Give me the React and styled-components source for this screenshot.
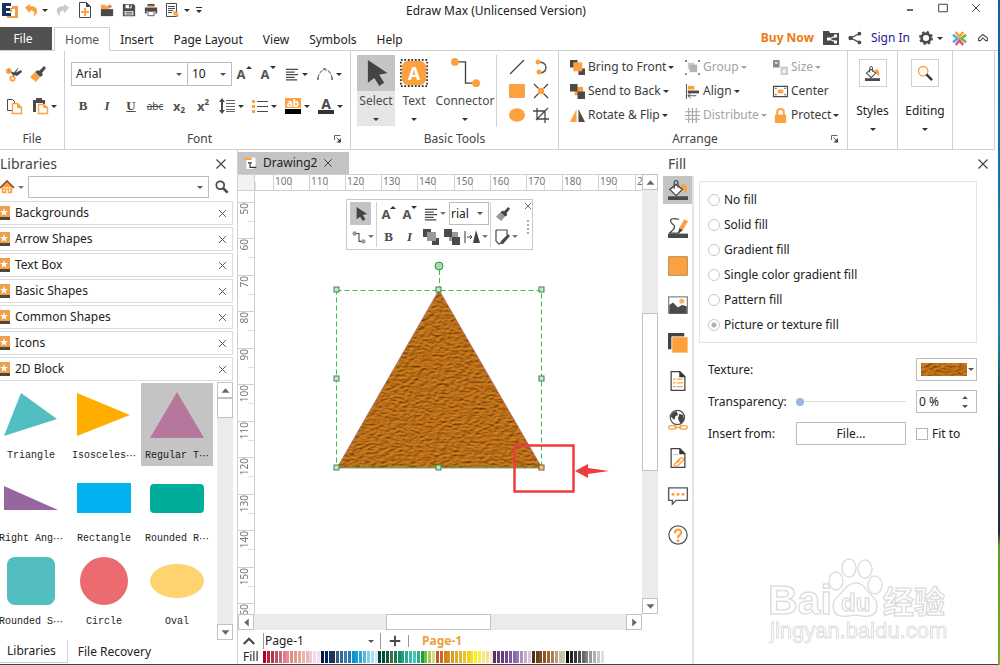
import React, { useState } from 'react'
import styled, { createGlobalStyle } from 'styled-components'

const dark = '#4a4a4a'
const orange = '#fca13e'
const line = '#d0d0d0'

const GlobalStyle = createGlobalStyle`
  * { box-sizing: border-box; }
  body {
    margin: 0;
    background: #fff;
    color: #222;
    font-family: 'Noto Sans', 'Noto Sans CJK SC', sans-serif;
    font-size: 12px;
    line-height: 16px;
  }
  button, input, select { font: inherit; color: inherit; margin: 0; padding: 0; border-radius: 0; }
  button { background: none; border: 0; }
  a { text-decoration: none; }
  svg { display: block; flex: none; overflow: visible; }
`

/* ---------- frame ---------- */

const Window = styled.div`
  display: flex;
  flex-direction: column;
  min-height: 100vh;
  border: 0 solid;
  border-width: 0 2px 0 0;
  border-image: linear-gradient(#0f5f9c, #1a86a8 50%, #14444f 62%, #1c2b3a 80%, #5c9a2a 82%, #74b02c) 1;
  box-shadow: inset 0 -1px #444;
  padding-bottom: 1px;
`

const TitleBar = styled.header`
  display: grid;
  grid-template-columns: 1fr auto 1fr;
  height: 27px;
  padding-right: 6px;
`

const QuickAccess = styled.div`
  display: flex;
  align-items: center;
  height: 20px;
`

const QuickButton = styled.button`
  display: flex;
  align-items: center;
  justify-content: center;
  gap: 4px;
  width: ${p => p.$w || 22}px;
  height: 20px;
`

const Title = styled.h1`
  margin: 0;
  font-size: 12px;
  font-weight: 400;
  line-height: 22px;
`

const WindowControls = styled.div`
  display: flex;
  justify-content: flex-end;
`

const ControlButton = styled.button`
  display: flex;
  align-items: center;
  justify-content: center;
  width: 33px;
  height: 16px;
`

const MenuBar = styled.nav`
  display: flex;
  height: 24px;
  border-bottom: 1px solid ${line};
`

const FileButton = styled.button`
  width: 52px;
  height: 23px;
  padding-right: 6px;
  background: #515151;
  color: #fff;
`

const MenuTab = styled.button`
  height: 24px;
  padding: 0 ${p => (p.$active ? 10 : 9)}px;
  margin-left: ${p => (p.$active ? 2 : 0)}px;
  border: 1px solid ${p => (p.$active ? line : 'transparent')};
  border-bottom: 0;
  background: ${p => (p.$active ? '#fff' : 'none')};
  color: ${p => (p.$active ? '#555' : '#222')};
`

const Account = styled.div`
  display: flex;
  align-items: center;
  gap: 9px;
  margin-left: auto;
  padding-right: 8px;
  height: 22px;
`

const BuyLink = styled.a`
  color: #ee7a14;
  font-weight: 700;
`

const SignLink = styled.a`
  color: #26208f;
`

const IconButton = styled.button`
  display: flex;
  align-items: center;
  justify-content: center;
  gap: 4px;
`

const Caret = styled.span`
  flex: none;
  width: 0;
  height: 0;
  border: 3px solid transparent;
  border-top-color: ${p => p.$color || '#333'};
  border-bottom: 0;
`

/* ---------- ribbon ---------- */

const Ribbon = styled.div`
  display: flex;
  height: 99px;
  margin-right: 3px;
  border-bottom: 1px solid ${line};
  border-right: 1px solid ${line};
`

const Group = styled.section`
  display: flex;
  flex-direction: column;
  border-right: 1px solid ${line};
`

const GroupFoot = styled.div`
  display: flex;
  align-items: center;
  height: 20px;
  color: #444;
  text-align: center;
`

const GroupName = styled.span`
  flex: 1;
`

const Launcher = styled.button`
  width: 16px;
  height: 12px;
`

const ToolRows = styled.div`
  display: flex;
  flex-direction: column;
  gap: 8px;
  flex: 1;
  padding: 11px ${p => p.$right}px 0 ${p => p.$left}px;
`

const ToolRow = styled.div`
  display: flex;
  height: 24px;
`

const Tool = styled.button`
  display: flex;
  align-items: center;
  justify-content: center;
  gap: 3px;
  width: ${p => p.$w || 24}px;
  height: 24px;
  color: ${dark};
`

const caretImage = "url(\"data:image/svg+xml,%3Csvg xmlns='http://www.w3.org/2000/svg' width='6' height='3'%3E%3Cpath d='M0 0h6L3 3z' fill='%23555'/%3E%3C/svg%3E\")"

const Combo = styled.select`
  appearance: none;
  width: ${p => p.$w}px;
  height: ${p => p.$h || 24}px;
  padding-left: ${p => p.$pad || 4}px;
  margin-right: ${p => p.$join ? -1 : 0}px;
  border: 1px solid #bdbdbd;
  background: #fff ${caretImage} no-repeat right ${p => p.$caret || 5}px center;
`

const LargeTools = styled.div`
  display: flex;
  flex: 1;
  padding: 4px 5px 0 6px;
`

const LargeTool = styled.button`
  display: flex;
  flex-direction: column;
  align-items: center;
  width: ${p => p.$w}px;
  height: 71px;
  background: ${p => (p.$active ? '#e6e6e6' : 'none')};
  color: ${dark};
`

const LargeIcon = styled.span`
  display: flex;
  align-items: center;
  justify-content: center;
  width: 100%;
  height: 36px;
  margin-bottom: 2px;
  background: ${p => (p.$active ? '#c4c4c4' : 'none')};
`

const LargeCaret = styled(Caret)`
  margin-top: 9px;
`

const MiniGrid = styled.div`
  display: grid;
  grid-template-columns: 24px 24px;
  grid-auto-rows: 24px;
  margin-left: -1px;
  padding-left: 8px;
  border-left: 1px solid ${line};
  height: 72px;
`

const ArrangeGrid = styled.div`
  display: grid;
  grid-template-columns: 115px 88px 77px;
  grid-auto-rows: 24px;
  flex: 1;
  padding: 4px 0 0 8px;
`

const ArrangeTool = styled.button`
  display: flex;
  align-items: center;
  white-space: nowrap;
  color: ${p => (p.$off ? '#a3a3a3' : '#3c3c3c')};
`

const ArrangeIcon = styled.span`
  display: flex;
  justify-content: center;
  width: 20px;
  margin-right: 1px;
`

const ArrangeText = styled.span`
  margin-right: 2px;
`

const PanelTool = styled.button`
  display: flex;
  flex-direction: column;
  align-items: center;
  width: ${p => p.$w}px;
  padding-top: 8px;
  border-right: 1px solid ${line};
`

const PanelIcon = styled.span`
  display: flex;
  align-items: center;
  justify-content: center;
  width: 28px;
  height: 28px;
  margin-bottom: 16px;
  border: 1px solid ${line};
`

/* ---------- workspace ---------- */

const Workspace = styled.main`
  display: flex;
  flex: 1;
`

const Sidebar = styled.aside`
  display: flex;
  flex-direction: column;
  width: 238px;
  border-right: 1px solid ${line};
`

const PanelHead = styled.div`
  display: flex;
  align-items: center;
  justify-content: space-between;
  height: 26px;
  padding: 2px ${p => p.$right || 10}px 0 ${p => p.$left || 0}px;
`

const PanelTitle = styled.h2`
  margin: 0;
  font-size: 14px;
  font-weight: 400;
  color: #444;
`

const LibrarySearch = styled.div`
  display: flex;
  align-items: center;
  height: 22px;
  padding-right: 8px;
  margin-bottom: 3px;
`

const HomeButton = styled(IconButton)`
  width: 28px;
  justify-content: flex-start;
`

const SearchInput = styled.input`
  flex: 1;
  min-width: 0;
  height: 22px;
  padding: 0 16px 0 4px;
  border: 1px solid #bdbdbd;
  background: #fff ${caretImage} no-repeat right 5px center;
  margin-right: 6px;
`

const LibraryList = styled.ul`
  display: flex;
  flex-direction: column;
  gap: 2px;
  margin: 0 4px 0 0;
  padding: 0;
  list-style: none;
`

const LibraryItem = styled.li`
  display: flex;
  align-items: center;
  gap: 5px;
  height: 24px;
  padding-right: 5px;
  border: 1px solid #dcdcdc;
  border-left: 0;
`

const LibraryName = styled.span`
  flex: 1;
`

const ShapeArea = styled.div`
  display: flex;
  flex: 1;
  margin: 1px 4px 0 0;
`

const ShapeGrid = styled.div`
  display: grid;
  grid-template-columns: repeat(3, 73px);
  grid-auto-rows: 83px;
  flex: 1;
  margin-left: -5px;
  padding-top: 1px;
`

const ShapeCell = styled.button`
  display: flex;
  flex-direction: column;
  align-items: center;
  width: 72px;
  background: ${p => (p.$active ? '#c4c4c4' : 'none')};
  font-family: 'Liberation Mono', monospace;
  font-size: 10px;
  white-space: nowrap;
`

const ShapeName = styled.span`
  display: flex;
  margin-top: 2px;
  line-height: 14px;
`

const Dots = styled.span`
  font-family: 'Noto Sans CJK SC', sans-serif;
`

const SideTabs = styled.div`
  display: flex;
  height: 24px;
`

const SideTab = styled.button`
  padding: 0 11px 0 ${p => (p.$active ? 7 : 10)}px;
  height: 23px;
  border: solid ${line};
  border-width: ${p => (p.$active ? '0 1px 1px 0' : 0)};
`

const Scrollbar = styled.div`
  display: flex;
  flex-direction: ${p => (p.$horizontal ? 'row' : 'column')};
  ${p => (p.$horizontal ? 'height' : 'width')}: 16px;
  background: #ebebeb;
`

const ScrollArrow = styled.button`
  display: flex;
  align-items: center;
  justify-content: center;
  flex: none;
  width: 16px;
  height: 16px;
  border: 1px solid #c2c2c2;
  background: #fff;
`

const Track = styled.div`
  display: flex;
  flex-direction: inherit;
  flex: 1;
`

const Space = styled.span`
  flex: ${p => p.$grow};
`

const Thumb = styled.span`
  flex: ${p => p.$grow};
  border: 1px solid #c2c2c2;
  background: #fff;
`

/* ---------- drawing area ---------- */

const Center = styled.section`
  display: flex;
  flex-direction: column;
  flex: 1;
  min-width: 0;
  padding: 2px 2px 0 0;
`

const DocTab = styled.div`
  display: flex;
  align-items: center;
  align-self: flex-start;
  gap: 6px;
  width: 111px;
  height: 22px;
  padding-left: 7px;
  background: #c4c4c4;
`

const DrawGrid = styled.div`
  display: grid;
  grid-template-columns: 17px minmax(0, 1fr) 16px;
  grid-template-rows: 17px minmax(0, 1fr) 16px;
  flex: 1;
`

const ScrollColumn = styled.div`
  display: flex;
  grid-row: 1 / 3;
  grid-column: 3;
`

const ScrollRow = styled(Scrollbar)`
  grid-column: 1 / 3;
`

const Corner = styled.div`
  background: #f2f2f2;
  border: solid ${line};
  border-width: 1px 1px 1px 0;
`

const RulerX = styled.div`
  display: flex;
  overflow: hidden;
  padding-left: 18px;
  border: solid ${line};
  border-width: 1px 0;
  background: linear-gradient(#ddd, #ddd) 0 100% / 1px 8px no-repeat;
`

const MarkX = styled.span`
  flex: none;
  width: 36px;
  padding-left: 1px;
  border-left: 1px solid ${line};
  background: linear-gradient(#ddd, #ddd) 17px 100% / 1px 6px no-repeat;
  color: #777;
  font-size: 10px;
  line-height: 12px;
  &:nth-child(5n) { width: 37px; }
`

const RulerY = styled.div`
  height: 0;
  min-height: 100%;
  overflow: hidden;
  padding-top: 11px;
  border-right: 1px solid ${line};
`

const MarkY = styled.span`
  display: flex;
  height: 36px;
  border-top: 1px solid ${line};
  background: linear-gradient(#ddd, #ddd) 100% 18px / 6px 1px no-repeat;
  &:nth-child(even) { height: 37px; }
`

const MarkYText = styled.span`
  writing-mode: vertical-rl;
  transform: rotate(180deg);
  color: #777;
  font-size: 10px;
  line-height: 12px;
  margin-bottom: auto;
`

const Canvas = styled.div`
  position: relative;
  overflow: hidden;
`

const Drawing = styled.svg`
  position: absolute;
  left: 75px;
  top: 65px;
`

const FloatBar = styled.div`
  position: absolute;
  left: 91px;
  top: 8px;
  display: flex;
  width: 187px;
  height: 51px;
  padding: 2px;
  border: 1px solid #c8c8c8;
  background: #fff;
`

const FloatPart = styled.div`
  width: ${p => p.$w}px;
  padding-left: 1px;
  border-right: ${p => (p.$last ? 0 : `1px solid ${line}`)};
`

const FloatRow = styled.div`
  display: flex;
  height: 23px;
`

const FloatTool = styled.button`
  display: flex;
  align-items: center;
  justify-content: center;
  gap: 2px;
  width: ${p => p.$w || 21}px;
  height: 23px;
  color: ${dark};
  background: ${p => (p.$active ? '#c4c4c4' : 'none')};
`

const FloatSide = styled.div`
  display: flex;
  flex-direction: column;
  align-items: center;
  flex: 1;
  gap: 9px;
`

const PageBar = styled.div`
  display: flex;
  align-items: center;
  height: 20px;
  padding: 2px 0 0 5px;
`

const PageSelect = styled.select`
  appearance: none;
  width: 118px;
  height: 16px;
  padding-left: 1px;
  margin-left: 8px;
  border: solid #999;
  border-width: 0 1px;
  background: ${caretImage} no-repeat right 6px center;
`

const AddPage = styled(IconButton)`
  width: 28px;
  height: 12px;
  border-right: 1px solid #999;
`

const PageTab = styled.button`
  margin-left: 13px;
  color: #eba03c;
  font-weight: 700;
`

const PaletteBar = styled.div`
  display: flex;
  align-items: center;
  height: 14px;
  padding-left: 5px;
`

const PaletteName = styled.span`
  width: 20px;
`

const Palette = styled.div`
  display: flex;
  gap: 1px;
`

const Swatch = styled.button`
  width: 3px;
  height: 12px;
  &:nth-child(6n) { margin-right: -1px; }
`

/* ---------- fill dock ---------- */

const Dock = styled.aside`
  display: flex;
  flex-direction: column;
  width: 338px;
`

const DockBody = styled.div`
  display: flex;
  flex: 1;
`

const DockStrip = styled.div`
  display: flex;
  flex-direction: column;
  gap: 10px;
  width: 34px;
  padding-left: 3px;
  border-right: 2px solid #e4e4e4;
`

const DockButton = styled.button`
  display: flex;
  align-items: center;
  justify-content: center;
  width: 29px;
  height: 28px;
  background: ${p => (p.$active ? '#c4c4c4' : 'none')};
  &:nth-child(3n) { margin-bottom: 1px; }
`

const FillForm = styled.form`
  flex: 1;
  padding: 5px 21px 0 5px;
`

const FillKinds = styled.fieldset`
  display: flex;
  flex-direction: column;
  min-width: 0;
  margin: 0 0 15px;
  padding: 5px 8px;
  border: 1px solid #e4e4e4;
`

const Choice = styled.label`
  display: flex;
  align-items: center;
  gap: 4px;
  height: 25px;
`

const Radio = styled.input`
  appearance: none;
  width: 12px;
  height: 12px;
  margin: 0;
  border: 1px solid #c8c8c8;
  border-radius: 50%;
  background: #fff;
  &:checked { background: radial-gradient(circle, #b0b0b0 2px, #fff 3px); }
`

const Check = styled.input`
  appearance: none;
  width: 12px;
  height: 12px;
  margin: 0;
  border: 1px solid #b5b5b5;
`

const FieldGrid = styled.div`
  display: grid;
  grid-template-columns: 78px 1fr 61px;
  grid-auto-rows: 23px;
  column-gap: 10px;
  row-gap: 9px;
  align-items: center;
  padding-left: 9px;
`

const FieldLabel = styled.label`
  grid-column: 1;
`

const Slider = styled.input`
  appearance: none;
  width: 100%;
  height: 10px;
  background: linear-gradient(#dcdcdc, #dcdcdc) center / 100% 1px no-repeat;
  &::-webkit-slider-thumb {
    appearance: none;
    width: 8px;
    height: 8px;
    border-radius: 50%;
    background: #9db1ea;
  }
`

const PlainButton = styled.button`
  height: 23px;
  border: 1px solid #bdbdbd;
`

const TextureBox = styled.div`
  display: grid;
  grid-column: 3;
  align-items: center;
  > * { grid-area: 1 / 1; }
`

const TexturePreview = styled.svg`
  margin-left: 5px;
  pointer-events: none;
`

const Spinner = styled.div`
  display: flex;
  align-items: center;
  height: 23px;
  padding-right: 5px;
  border: 1px solid #bdbdbd;
`

const SpinInput = styled.input`
  width: 100%;
  min-width: 0;
  padding-left: 2px;
  border: 0;
`

const SpinArrows = styled.button`
  display: flex;
`

const Watermark = styled.svg`
  position: fixed;
  right: 50px;
  bottom: 17px;
  pointer-events: none;
`

/* ---------- icons ---------- */

const art = {
  logo: <><path d="M0 1h9v3H4v2h4v3H4v2h5v3H0z" fill="#17325e" /><path d="M10 4h6v12H5v-2h8V7h-3v3H8V6h2z" fill="#f0a04a" /></>,
  undo: <path d="M1 5l6-4v3c5-1 8 2 8 5s-2 5-4 6c1-2 1-4 0-5-1-1-2-2-4-1v3z" fill={orange} />,
  redo: <path d="M15 5L9 1v3C4 3 1 6 1 9s2 5 4 6c-1-2-1-4 0-5 1-1 2-2 4-1v3z" fill="#c9c9c9" />,
  newDoc: <><path d="M2.500.500h7l4 4v11h-11z" fill="#fff" stroke={dark} /><path d="M9 0v5h5z" fill={dark} /><path d="M7 6h2v3h3v2H9v3H7v-3H4V9h3z" fill={orange} /></>,
  open: <><path d="M1 2h5l1 2h2v3H1z" fill={orange} /><path d="M1 7h14v8H1z" fill={dark} /><path d="M10 1l4 3-4 3V5H8V3h2z" fill="#d48a3a" /></>,
  save: <><path d="M1 1h12l2 2v12H1z" fill={dark} /><path d="M4 2h7v4H4zM3 9h10v5H3z" fill="#fff" /><path d="M8 2h2v3H8zM4 10h8v1H4zM4 12h8v1H4z" fill={dark} /></>,
  print: <><path d="M4 1h8v3H4zM1 5h14v7h-2V9H3v3H1z" fill={dark} /><path d="M4.500 9.500h7v5h-7z" fill="#fff" stroke={dark} /><path d="M4 3h8v2H4z" fill={orange} /></>,
  list: <><path d="M2.500 1.500h10v13h-10z" fill="#fff" stroke={dark} /><path d="M4 4h7v1H4zM4 6h7v1H4zM4 8h5v1H4zM4 10h4v1H4z" fill={dark} /><path d="M9 9l6 1-2 1 2 3-1 1-3-2-1 2z" fill={orange} /></>,
  cut: <><path d="M2 4l7 3 6-3 1 2-5 4-3-1-6-4z" fill={dark} /><path d="M13 1l-5 9-2-1 5-6z" fill={dark} /><g fill="none" stroke={orange} strokeWidth="1.800"><circle cx="2.800" cy="5" r="2" /><circle cx="6.500" cy="12.500" r="2.200" /></g></>,
  brush: <><path d="M14 0l2 2-4 5 1 2-3 2-5-5 3-2 1 1z" fill={dark} /><path d="M5 6l5 5-4 5-6-5z" fill={orange} /></>,
  grayBrush: <><path d="M14 0l2 2-4 5 1 2-3 2-5-5 3-2 1 1z" fill="#444" /><path d="M5 6l5 5-4 5-6-5z" fill="#999" /></>,
  copy: <><path d="M1.500 1.500h5l2 2v9h-7z" fill="#fff" stroke={dark} /><path d="M6.500 5.500h5l4 4v6h-9z" fill="#fff" stroke={orange} strokeWidth="1.400" /><path d="M11 5v5h5z" fill={orange} /></>,
  paste: <><path d="M1 2h12v4h-2V5H4v9H1z" fill={dark} /><path d="M4 0h6v4H4z" fill={dark} /><path d="M6.500 6.500h5l4 3v6h-9z" fill="#fff" stroke={orange} strokeWidth="1.400" /><path d="M11 6v4h5z" fill={orange} /></>,
  alignText: <path d="M1 2h14v1.500H1zM1 5h10v1.500H1zM1 8h14v1.500H1zM1 11h10v1.500H1zM1 14h13v1.500H1z" fill={dark} />,
  curve: <><path d="M1 12C3 1 13 1 15 12" fill="none" stroke="#777" strokeWidth="1.200" strokeDasharray="4 1" /><path d="M0 11h2v3H0zM14 11h2v3h-2zM6 2h3v2H6z" fill="#888" /></>,
  spacing: <><path d="M3 0l3 4H4v8h2l-3 4-3-4h2V4H0z" fill={dark} /><path d="M7 2h9v1H7zM7 5h9v1H7zM7 8h9v1H7zM7 11h9v1H7zM7 13h9v1H7z" fill="#666" /></>,
  bullets: <><path d="M0 2h3v3H0zM0 7h3v3H0zM0 12h3v3H0z" fill={orange} /><path d="M5 3h11v1H5zM5 8h11v1H5zM5 13h11v1H5z" fill={dark} /></>,
  highlight: <><path d="M0 0h16v10H0z" fill={orange} /><text x="8" y="9" fontSize="10" fontWeight="700" textAnchor="middle" fill="#fff">ab</text><path d="M0 11h16v5H0z" fill="#000" /></>,
  fontColor: <><text x="8" y="11" fontSize="14" fontWeight="700" textAnchor="middle" fill={dark}>A</text><path d="M0 12h16v4H0z" fill="#333" /></>,
  cursor: <path d="M3 0l12 8-5 1 3 5-3 2-3-5-4 3z" fill="#444" />,
  textTool: <><rect x="1" y="1" width="14" height="14" rx="4" fill={orange} /><path d="M.5.500h15v15H.500z" fill="none" stroke="#222" strokeDasharray="1 1" strokeWidth=".9" /><text x="8" y="12" fontSize="10" fontWeight="700" textAnchor="middle" fill="#fff">A</text></>,
  connector: <><path d="M3 2h5v11h5" fill="none" stroke="#444" strokeWidth=".7" /><circle cx="2.500" cy="2" r="2" fill={orange} /><circle cx="13.500" cy="13" r="2" fill={orange} /></>,
  grayConnector: <><path d="M3 4h5v9h5" fill="none" stroke="#444" strokeWidth="1.200" /><circle cx="3" cy="4" r="2.500" fill="#999" /><circle cx="13" cy="13" r="2.500" fill="#999" /></>,
  line: <path d="M1 15L15 1" stroke="#444" strokeWidth="1.200" />,
  arc: <><path d="M5 3c10 0 10 9 3 11" fill="none" stroke="#555" strokeWidth="1.400" /><circle cx="5" cy="3" r="2.500" fill={orange} /><circle cx="6" cy="13" r="2.500" fill={orange} /></>,
  square: <path d="M.5 1.500h15v13H.500z" fill={orange} stroke="#d98e3b" strokeWidth=".6" />,
  bigSquare: <path d="M.5.500h15v15H.500z" fill={orange} stroke="#b59060" strokeWidth=".8" />,
  cross: <><path d="M1 1l14 14M15 1L1 15" stroke="#444" strokeWidth="1.200" /><path d="M5 5h6v6H5z" fill={orange} /></>,
  ellipse: <ellipse cx="8" cy="8" rx="8" ry="6.800" fill={orange} />,
  crop: <path d="M4 1v11h12M0 4h12v12M3 13L15 1" fill="none" stroke={dark} strokeWidth="1.300" />,
  front: <><path d="M0 0h8v8H0zM9 9h7v7H9z" fill={dark} /><path d="M3.500 2.500h9.500v9.500H3.500z" fill={orange} /></>,
  back: <><path d="M5 3h9v9H5z" fill={orange} /><path d="M0 0h8v8H0zM8 8h8v8H8z" fill={dark} /></>,
  grayFront: <><path d="M0 0h8v8H0zM9 9h7v7H9z" fill={dark} /><path d="M4 3h9v9H4z" fill="#999" /></>,
  grayBack: <><path d="M5 3h9v9H5z" fill="#999" /><path d="M0 0h8v8H0zM8 8h8v8H8z" fill={dark} /></>,
  flip: <><path d="M7 1v14H0z" fill={orange} /><path d="M9 1v14h7z" fill={dark} /></>,
  group: <><path d="M3 3h7v7H3z" fill="#c9c9c9" /><path d="M5 5h8v8H5z" fill="#b3b3b3" /><path d="M0 0h2v2H0zM14 0h2v2h-2zM0 14h2v2H0zM14 14h2v2h-2z" fill="#777" /></>,
  align: <><path d="M1 0h1v16H1z" fill={dark} /><path d="M3 2h7v4H3z" fill={orange} /><path d="M3 7h12v3H3z" fill={dark} /><path d="M3 12.500h9M6 10l-3 2.500L6 15" fill="none" stroke={dark} /></>,
  distribute: <path d="M4 0v16M8 0v16M12 0v16M0 4h16M0 8h16M0 12h16" fill="none" stroke="#a5a5a5" strokeWidth="1.200" />,
  size: <><path d="M0 0h7v8H0z" fill="#888" /><path d="M2 2h3v2H2z" fill="#ddd" /><path d="M8 7h8v9H8z" fill="#ccc" /><path d="M10 10h4v4h-4z" fill="#eee" /></>,
  center: <><path d="M.5 2.500h15v11H.500z" fill="#fff" stroke={dark} strokeWidth="1.200" /><path d="M5 6h6v4H5z" fill={orange} /><path d="M2 4h2v1H2zM12 4h2v1h-2zM2 11h2v1H2zM12 11h2v1h-2z" fill={dark} /></>,
  lock: <><path d="M2 7h12v9H2z" fill={orange} /><path d="M4.500 8V4c0-4 7-4 7 0v4" fill="none" stroke={orange} strokeWidth="2" /></>,
  bucket: <><path d="M10 4c4-2 6 1 5 7l-3-3z" fill={orange} /><path d="M6.500 3.500l5 4-5 5-5-5z" fill="#fff" stroke={dark} strokeWidth="1.100" /><path d="M5 7V2c0-2 3-2 3 0v4" fill="none" stroke={dark} /><path d="M0 13h16v3H0z" fill={dark} /></>,
  find: <><circle cx="5.500" cy="5.500" r="5" fill="#fff" stroke={orange} strokeWidth="1.500" /><path d="M9 9l6 6" stroke="#333" strokeWidth="2.500" /></>,
  search: <><circle cx="6" cy="6" r="4.500" fill="none" stroke={dark} strokeWidth="2" /><path d="M9.500 9.500l5 5" stroke={dark} strokeWidth="3" /></>,
  shareFolder: <><path d="M0 1h6l1 2h9v12H0z" fill={dark} /><path d="M13 6L6 9l7 3" fill="none" stroke="#fff" strokeWidth="1.200" /><path d="M11 4.500h3v3h-3zM4 7.500h3v3H4zM11 10.500h3v3h-3z" fill="#fff" /></>,
  share: <><path d="M13 3L3 8l10 5" fill="none" stroke={dark} strokeWidth="1.300" /><g fill={dark}><circle cx="13" cy="3" r="2.200" /><circle cx="3" cy="8" r="2.600" /><circle cx="13" cy="13" r="2.200" /></g></>,
  gear: <><circle cx="8" cy="8" r="5" fill="none" stroke={dark} strokeWidth="3" /><circle cx="8" cy="8" r="7" fill="none" stroke={dark} strokeWidth="2" strokeDasharray="2.750 2.750" /></>,
  pinwheel: <g fill="none" strokeWidth="2.600"><path d="M4 1l4 5 4-5" stroke="#f5a12c" /><path d="M1 4l5 4-5 4" stroke="#46aede" /><path d="M15 4l-5 4 5 4" stroke="#6fb53f" /><path d="M4 15l4-5 4 5" stroke="#ed4d68" /></g>,
  chevrons: <path d="M8 4l5 4v3h-2L8 8l-3 3H3V8z" fill="none" stroke={dark} strokeWidth="1.200" />,
  home: <><path d="M8 1l8 8h-2v6H2V9H0z" fill={orange} /><path d="M0 9l8-8 8 8" fill="none" stroke="#8a5a35" strokeWidth="2" /><path d="M4 8h2v2H4zM7 8h2v2H7zM10 8h2v2h-2zM4 11h2v2H4zM10 11h2v2h-2zM7 11h2v4H7z" fill="#fff2de" /></>,
  pen: <><path d="M9 1C0-1 1 3 5 6c1 2-2 5-4 6h7l2-3" fill="none" stroke={dark} strokeWidth="1" /><path d="M13 1l3 1.500-4 7-3-1.500z" fill={orange} /><path d="M9 8l3 1.500L8 13z" fill={dark} /><path d="M0 12.500h16V16H0z" fill={dark} /></>,
  picture: <><path d="M.5 1.500h15v13H.500z" fill="#fff" stroke="#888" /><circle cx="11" cy="5" r="2" fill="#f5b06a" /><path d="M1 8l3-2 4 4 3-2 4 1v6H1z" fill={dark} /></>,
  shadow: <><path d="M0 0h13v13H0z" fill="#444" /><path d="M3 3h13v13H3z" fill={orange} stroke="#fff" strokeWidth=".6" /></>,
  docList: <><path d="M2.500.500h7l4 4v11h-11z" fill="#fff" stroke="#444" /><path d="M9 0v5h5z" fill="#333" /><path d="M4 6h2v1H4zM7 6h5v1H7zM4 9h2v1H4zM7 9h5v1H7zM4 12h2v1H4zM7 12h5v1H7z" fill={orange} /></>,
  globe: <><circle cx="7.500" cy="6" r="5.700" fill="#fff" stroke="#555" /><path d="M4 2l3-1 1 3-2 1-1 3-3-3zM9 3l3 1 1 4-3 3-2-4z" fill="#444" /><rect x=".6" y="12.500" width="6" height="2.800" rx="1.400" fill="none" stroke={orange} strokeWidth="1.100" /><rect x="9.400" y="12.500" width="6" height="2.800" rx="1.400" fill="none" stroke={orange} strokeWidth="1.100" /><path d="M5 13.900h6" stroke={orange} /></>,
  attach: <><path d="M2.500.500h7l4 4v11h-11z" fill="#fff" stroke="#444" /><path d="M9 0v5h5z" fill="#333" /><path d="M5 13l5-5c2-1 3 1 2 2l-4 4c-2 1-3 0-3-1zM7 12l3-3" fill="none" stroke={orange} strokeWidth="1.100" /><path d="M4 5h4v.7H4z" fill="#bbb" /></>,
  comment: <><path d="M.5 1.500h15v10h-9l-3 3v-3h-3z" fill="#fff" stroke="#555" strokeWidth="1.100" /><g fill={orange}><circle cx="4" cy="6.500" r="1.200" /><circle cx="8" cy="6.500" r="1.200" /><circle cx="12" cy="6.500" r="1.200" /></g></>,
  help: <><circle cx="8" cy="8" r="7.300" fill="#fff" stroke="#555" /><path d="M5.500 6.500C5.500 2.500 11 3 10.500 6.300 10.300 8 8 8 8 10.300" fill="none" stroke={orange} strokeWidth="1.900" /><circle cx="8" cy="12.500" r="1.200" fill={orange} /></>,
  flipArrow: <><path d="M0 2h2v12H0z" fill="#999" /><path d="M3 8h5M6 6l2 2-2 2" fill="none" stroke="#444" /><path d="M12 1l4 13H9z" fill="#444" /></>,
  editShape: <><path d="M2 1h11v5M2 1v11l3 3 3-1" fill="none" stroke={dark} strokeWidth="1.200" /><path d="M14 5l2 2-7 8H6l1-3z" fill={dark} /></>,
  docFlow: <><path d="M2 1h12v15H2z" fill="#fff" /><path d="M0 1h9v3H0z" fill={orange} /><path d="M4 7h5v1.500H4zM6 8h1.500v5H13v1.500H6zM11 13h4v2h-4z" fill="#333" /></>,
  launcher: <><path d="M1 10V1h12" fill="none" stroke="#555" strokeWidth="1.800" /><path d="M5 5l6 6" stroke="#444" strokeWidth="1.800" /><path d="M14 6v9H5z" fill="#444" /></>,
  close: <path d="M2 2l12 12M14 2L2 14" stroke="#444" strokeWidth="1.600" fill="none" />,
  minimize: <path d="M2 12h12" stroke="#333" strokeWidth="3" />,
  maximize: <path d="M1 2h14v12H1z" fill="none" stroke="#444" strokeWidth="1.600" />,
  customize: <path d="M2 2h12v2H2zM2 8h12l-6 6z" fill="#333" />,
  up: <path d="M8 4l7 8H1z" fill="#666" />,
  down: <path d="M8 12l7-8H1z" fill="#666" />,
  left: <path d="M4 8l8-7v14z" fill="#666" />,
  right: <path d="M12 8L4 1v14z" fill="#666" />,
  chevronUp: <path d="M1 12l7-7 7 7" fill="none" stroke={dark} strokeWidth="3" />,
  plus: <path d="M8 1v14M1 8h14" stroke={dark} strokeWidth="2.600" />,
  spin: <path d="M8 0l4 4H4zM8 16l4-4H4z" fill="#555" />,
  grip: <path d="M7 1h2v2H7zM7 5h2v2H7zM7 9h2v2H7zM7 13h2v2H7z" fill="#aaa" />
}

const Icon = ({ name, size = 16 }) => (
  <svg width={size} height={size} viewBox="0 0 16 16" aria-hidden="true">{art[name]}</svg>
)

const Letter = styled.span`
  font-family: 'Liberation Serif', serif;
  font-size: 13px;
  font-weight: 700;
  font-style: ${p => (p.$italic ? 'italic' : 'normal')};
  text-decoration: ${p => (p.$under ? 'underline' : 'none')};
`

const Strike = styled.span`
  font-size: 10px;
  text-decoration: line-through;
`

const Sup = styled.span`
  font-size: 8px;
  line-height: 8px;
  font-weight: 700;
  align-self: ${p => (p.$low ? 'flex-end' : 'flex-start')};
  padding: 4px 0;
  margin-left: -3px;
`

const SizeLetter = styled.span`
  font-size: 13px;
  font-weight: 700;
  color: #555;
`

const SizeMark = styled.span`
  align-self: flex-start;
  margin: 4px 0 0 -3px;
  border: 3px solid transparent;
  border-${p => (p.$up ? 'bottom' : 'top')}-color: #333;
  border-${p => (p.$up ? 'top' : 'bottom')}: 0;
`

const StarIcon = () => (
  <svg width="10" height="14" viewBox="4 0 10 14" aria-hidden="true">
    <path d="M0 0h14v14H0z" fill="#f0a04a" />
    <path d="M0 11h14v3H0z" fill="#55463c" />
    <path d="M8 2l1 3h3L9.600 6.800l1 3L8 8 5.400 9.800l1-3L4 5h3z" fill="#fff" />
  </svg>
)

/* ---------- data ---------- */

const libraries = ['Backgrounds', 'Arrow Shapes', 'Text Box', 'Basic Shapes', 'Common Shapes', 'Icons', '2D Block']

const shapes = [
  { name: 'Triangle', art: <path d="M22 10l36 26L5 53z" fill="#52bec0" /> },
  { name: 'Isosceles', cut: true, art: <path d="M5 10l53 22L5 53z" fill="#ffae00" /> },
  { name: 'Regular T', cut: true, art: <path d="M32 9l27 46H5z" fill="#b5779b" /> },
  { name: 'Right Ang', cut: true, art: <path d="M5 20l54 24H5z" fill="#9566a0" /> },
  { name: 'Rectangle', art: <path d="M5 17h54v30H5z" fill="#00b2f0" /> },
  { name: 'Rounded R', cut: true, art: <rect x="5" y="18" width="54" height="29" rx="4" fill="#00ad9a" /> },
  { name: 'Rounded S', cut: true, art: <rect x="8" y="8" width="48" height="48" rx="8" fill="#52bec0" /> },
  { name: 'Circle', art: <circle cx="32" cy="32" r="24" fill="#ec6b70" /> },
  { name: 'Oval', art: <ellipse cx="32" cy="32" rx="27" ry="17" fill="#ffd470" /> }
]

const palette = (
  'b00020 c41f3a a83a4c bd5266 c9677c d97f94 e58d96 e08c80 e09a8c e0a898 eab4a8 e8b8c0 f2c9d8 f4d8e6 f4dff0 ' +
  '0a1440 102060 0a3a5c 28304c 3c5c80 2f6a94 3d78b4 2878b8 1590c8 1a9cd4 20a8dc 50b8e0 84cce0 aedce8 d0ecf4 ' +
  '004838 005038 0c5c3c 4c6848 147850 0c8c68 20a07c 2cac98 38bca4 48c4bc 2cb080 10a050 7cbc30 a8cc48 cce08c ' +
  'c45828 d06818 d48020 d89020 d0a030 dcac28 e0b830 e8c428 f0d020 f8e018 fcec20 f8f040 f0ea80 f0e0a0 f4e8c0 ' +
  '5c2c68 683c7c 604070 74488c 7c589c 8868a8 9878b8 b08cc0 c8acd4 dcc4d8 ' +
  '502c18 644020 7c4c28 8c5428 9c6838 a88050 c09c78 d0bca0 c8c8b0 ' +
  '000000 202020 383838 505050 686868 808080 989898 b0b0b0 c8c8c8 e0e0e0'
).split(' ')

const fillKinds = ['No fill', 'Solid fill', 'Gradient fill', 'Single color gradient fill', 'Pattern fill', 'Picture or texture fill']
const dockTools = ['bucket', 'pen', 'bigSquare', 'picture', 'shadow', 'docList', 'globe', 'attach', 'comment', 'help']

const arrange = [
  ['front', 'Bring to Front', true], ['group', 'Group', true, true], ['size', 'Size', true, true],
  ['back', 'Send to Back', true], ['align', 'Align', true], ['center', 'Center', false],
  ['flip', 'Rotate & Flip', true], ['distribute', 'Distribute', true, true], ['lock', 'Protect', true]
]

const handles = [[7, 34], [109, 34], [212, 34], [7, 123], [212, 123], [7, 212], [109, 212]]

/* ---------- parts ---------- */

const Leather = ({ id }) => (
  <filter id={id} x="0" y="0" width="100%" height="100%" colorInterpolationFilters="sRGB">
    <feTurbulence type="fractalNoise" baseFrequency="0.2 0.45" numOctaves="3" seed="4" result="noise" />
    <feDiffuseLighting in="noise" surfaceScale="1.300" diffuseConstant="1.150" lightingColor="#bd7018" result="grain">
      <feDistantLight azimuth="250" elevation="58" />
    </feDiffuseLighting>
    <feComposite in="grain" in2="SourceGraphic" operator="in" />
  </filter>
)

const TopBar = () => (
  <TitleBar>
    <QuickAccess>
      <QuickButton $w={20} aria-label="Edraw"><Icon name="logo" /></QuickButton>
      <QuickButton $w={32} aria-label="Undo"><Icon name="undo" size={14} /><Caret /></QuickButton>
      <QuickButton aria-label="Redo"><Icon name="redo" size={14} /></QuickButton>
      <QuickButton aria-label="New"><Icon name="newDoc" /></QuickButton>
      <QuickButton aria-label="Open"><Icon name="open" size={14} /></QuickButton>
      <QuickButton aria-label="Save"><Icon name="save" size={14} /></QuickButton>
      <QuickButton aria-label="Print"><Icon name="print" size={14} /></QuickButton>
      <QuickButton $w={30} aria-label="Options"><Icon name="list" /><Caret /></QuickButton>
      <QuickButton $w={14} aria-label="Customize"><Icon name="customize" size={8} /></QuickButton>
    </QuickAccess>
    <Title>Edraw Max (Unlicensed Version)</Title>
    <WindowControls>
      <ControlButton aria-label="Minimize"><Icon name="minimize" size={8} /></ControlButton>
      <ControlButton aria-label="Maximize"><Icon name="maximize" size={10} /></ControlButton>
      <ControlButton aria-label="Close"><Icon name="close" size={10} /></ControlButton>
    </WindowControls>
  </TitleBar>
)

const Menu = () => (
  <MenuBar>
    <FileButton>File</FileButton>
    {['Home', 'Insert', 'Page Layout', 'View', 'Symbols', 'Help'].map(tab => (
      <MenuTab key={tab} $active={tab === 'Home'}>{tab}</MenuTab>
    ))}
    <Account>
      <BuyLink href="#buy">Buy Now</BuyLink>
      <IconButton aria-label="Share folder"><Icon name="shareFolder" /></IconButton>
      <IconButton aria-label="Share"><Icon name="share" size={14} /></IconButton>
      <SignLink href="#sign">Sign In</SignLink>
      <IconButton aria-label="Settings"><Icon name="gear" size={14} /><Caret /></IconButton>
      <IconButton aria-label="Apps"><Icon name="pinwheel" size={15} /></IconButton>
      <IconButton aria-label="Collapse"><Icon name="chevrons" size={14} /></IconButton>
    </Account>
  </MenuBar>
)

const RibbonBar = () => (
  <Ribbon>
    <Group>
      <ToolRows $left={2} $right={2}>
        <ToolRow>
          <Tool aria-label="Cut"><Icon name="cut" /></Tool>
          <Tool aria-label="Format painter"><Icon name="brush" /></Tool>
        </ToolRow>
        <ToolRow>
          <Tool aria-label="Copy"><Icon name="copy" /></Tool>
          <Tool $w={36} aria-label="Paste"><Icon name="paste" /><Caret /></Tool>
        </ToolRow>
      </ToolRows>
      <GroupFoot><GroupName>File</GroupName></GroupFoot>
    </Group>

    <Group>
      <ToolRows $left={6} $right={3}>
        <ToolRow>
          <Combo $w={117} $join aria-label="Font"><option>Arial</option></Combo>
          <Combo $w={45} aria-label="Font size"><option>10</option></Combo>
          <Tool aria-label="Grow font"><SizeLetter>A</SizeLetter><SizeMark $up /></Tool>
          <Tool aria-label="Shrink font"><SizeLetter>A</SizeLetter><SizeMark /></Tool>
          <Tool $w={33} aria-label="Align text"><Icon name="alignText" size={14} /><Caret /></Tool>
          <Tool $w={33} aria-label="Text curve"><Icon name="curve" /><Caret /></Tool>
        </ToolRow>
        <ToolRow>
          <Tool aria-label="Bold"><Letter>B</Letter></Tool>
          <Tool aria-label="Italic"><Letter $italic>I</Letter></Tool>
          <Tool aria-label="Underline"><Letter $under>U</Letter></Tool>
          <Tool aria-label="Strike"><Strike>abc</Strike></Tool>
          <Tool aria-label="Subscript"><SizeLetter>x</SizeLetter><Sup $low>2</Sup></Tool>
          <Tool aria-label="Superscript"><SizeLetter>x</SizeLetter><Sup>2</Sup></Tool>
          <Tool $w={33} aria-label="Line spacing"><Icon name="spacing" /><Caret /></Tool>
          <Tool $w={33} aria-label="Bullets"><Icon name="bullets" /><Caret /></Tool>
          <Tool $w={33} aria-label="Highlight"><Icon name="highlight" /><Caret /></Tool>
          <Tool $w={33} aria-label="Font color"><Icon name="fontColor" /><Caret /></Tool>
        </ToolRow>
      </ToolRows>
      <GroupFoot>
        <GroupName>Font</GroupName>
        <Launcher aria-label="Font options"><Icon name="launcher" size={8} /></Launcher>
      </GroupFoot>
    </Group>

    <Group>
      <LargeTools>
        <LargeTool $w={38} $active><LargeIcon $active><Icon name="cursor" size={26} /></LargeIcon>Select<LargeCaret /></LargeTool>
        <LargeTool $w={38}><LargeIcon><Icon name="textTool" size={28} /></LargeIcon>Text<LargeCaret /></LargeTool>
        <LargeTool $w={64}><LargeIcon><Icon name="connector" size={31} /></LargeIcon>Connector<LargeCaret /></LargeTool>
        <MiniGrid>
          {['line', 'arc', 'square', 'cross', 'ellipse', 'crop'].map(name => (
            <Tool key={name} aria-label={name}><Icon name={name} /></Tool>
          ))}
        </MiniGrid>
      </LargeTools>
      <GroupFoot><GroupName>Basic Tools</GroupName></GroupFoot>
    </Group>

    <Group>
      <ArrangeGrid>
        {arrange.map(([icon, text, menu, off]) => (
          <ArrangeTool key={text} $off={off}>
            <ArrangeIcon><Icon name={icon} size={15} /></ArrangeIcon>
            <ArrangeText>{text}</ArrangeText>
            {menu && <Caret $color={off ? '#a3a3a3' : '#333'} />}
          </ArrangeTool>
        ))}
      </ArrangeGrid>
      <GroupFoot>
        <GroupName>Arrange</GroupName>
        <Launcher aria-label="Arrange options"><Icon name="launcher" size={8} /></Launcher>
      </GroupFoot>
    </Group>

    <PanelTool $w={50}><PanelIcon><Icon name="bucket" size={15} /></PanelIcon>Styles<LargeCaret /></PanelTool>
    <PanelTool $w={55}><PanelIcon><Icon name="find" size={15} /></PanelIcon>Editing<LargeCaret /></PanelTool>
  </Ribbon>
)

const VerticalScroll = ({ before, size, after }) => (
  <Scrollbar>
    <ScrollArrow aria-label="Scroll up"><Icon name="up" size={9} /></ScrollArrow>
    <Track><Space $grow={before} /><Thumb $grow={size} /><Space $grow={after} /></Track>
    <ScrollArrow aria-label="Scroll down"><Icon name="down" size={9} /></ScrollArrow>
  </Scrollbar>
)

const LibraryPanel = () => (
  <Sidebar>
    <PanelHead>
      <PanelTitle>Libraries</PanelTitle>
      <IconButton aria-label="Close libraries"><Icon name="close" size={12} /></IconButton>
    </PanelHead>
    <LibrarySearch>
      <HomeButton aria-label="Library menu"><Icon name="home" size={14} /><Caret $color="#777" /></HomeButton>
      <SearchInput aria-label="Search shapes" />
      <IconButton aria-label="Search"><Icon name="search" size={14} /></IconButton>
    </LibrarySearch>
    <LibraryList>
      {libraries.map(name => (
        <LibraryItem key={name}>
          <StarIcon />
          <LibraryName>{name}</LibraryName>
          <IconButton aria-label={`Close ${name}`}><Icon name="close" size={9} /></IconButton>
        </LibraryItem>
      ))}
    </LibraryList>
    <ShapeArea>
      <ShapeGrid>
        {shapes.map(s => (
          <ShapeCell key={s.name} $active={s.name === 'Regular T'}>
            <svg width="64" height="64" aria-hidden="true">{s.art}</svg>
            <ShapeName>{s.name}{s.cut && <Dots>⋯</Dots>}</ShapeName>
          </ShapeCell>
        ))}
      </ShapeGrid>
      <VerticalScroll before={0} size={18} after={208} />
    </ShapeArea>
    <SideTabs>
      <SideTab $active>Libraries</SideTab>
      <SideTab>File Recovery</SideTab>
    </SideTabs>
  </Sidebar>
)

const FloatingToolbar = () => (
  <FloatBar>
    <FloatPart $w={29}>
      <FloatRow><FloatTool $active aria-label="Select"><Icon name="cursor" size={14} /></FloatTool></FloatRow>
      <FloatRow><FloatTool $w={26} aria-label="Connector"><Icon name="grayConnector" size={14} /><Caret $color="#777" /></FloatTool></FloatRow>
    </FloatPart>
    <FloatPart $w={114}>
      <FloatRow>
        <FloatTool aria-label="Grow font"><SizeLetter>A</SizeLetter><SizeMark $up /></FloatTool>
        <FloatTool aria-label="Shrink font"><SizeLetter>A</SizeLetter><SizeMark /></FloatTool>
        <FloatTool $w={29} aria-label="Align text"><Icon name="alignText" size={14} /><Caret $color="#777" /></FloatTool>
        <Combo $w={40} $h={23} $pad={1} aria-label="Font"><option>rial</option></Combo>
      </FloatRow>
      <FloatRow>
        <FloatTool aria-label="Bold"><Letter>B</Letter></FloatTool>
        <FloatTool aria-label="Italic"><Letter $italic>I</Letter></FloatTool>
        <FloatTool aria-label="Front"><Icon name="grayFront" /></FloatTool>
        <FloatTool aria-label="Back"><Icon name="grayBack" /></FloatTool>
        <FloatTool $w={28} aria-label="Flip"><Icon name="flipArrow" /><Caret $color="#777" /></FloatTool>
      </FloatRow>
    </FloatPart>
    <FloatPart $w={30} $last>
      <FloatRow><FloatTool aria-label="Format painter"><Icon name="grayBrush" size={14} /></FloatTool></FloatRow>
      <FloatRow><FloatTool $w={28} aria-label="Edit shape"><Icon name="editShape" /><Caret $color="#777" /></FloatTool></FloatRow>
    </FloatPart>
    <FloatSide>
      <IconButton aria-label="Close toolbar"><Icon name="close" size={8} /></IconButton>
      <Icon name="grip" />
    </FloatSide>
  </FloatBar>
)

const Selection = () => (
  <Drawing width="290" height="240" aria-label="Selected triangle">
    <defs><Leather id="hide" /></defs>
    <path d="M109 34l103 178H7z" fill="#b06a1c" filter="url(#hide)" />
    <path d="M109 34l103 178H7z" fill="none" stroke="#a86a72" strokeWidth=".8" />
    <path d="M109.500 14v20M6.500 34.500h205v177H6.500z" fill="none" stroke="#2fc04a" strokeDasharray="5 3" />
    <circle cx="109" cy="10" r="4" fill="#9be3a4" stroke="#3c8a4c" />
    {handles.map(([x, y]) => (
      <rect key={`${x}-${y}`} x={x - 3} y={y - 3} width="5" height="5" fill="#b5efbb" stroke="#4f7a57" />
    ))}
    <rect x="209" y="209" width="5" height="5" fill="#ffc56e" stroke="#7a5530" />
    <rect x="184.500" y="189.500" width="59" height="46" fill="none" stroke="#ee3c3c" strokeWidth="2.500" />
    <path d="M245 215l13-7v4l21 3-21 3v4z" fill="#ee3c3c" />
  </Drawing>
)

const DrawingArea = () => (
  <Center>
    <DocTab>
      <Icon name="docFlow" size={12} />
      Drawing2
      <IconButton aria-label="Close drawing"><Icon name="close" size={10} /></IconButton>
    </DocTab>
    <DrawGrid>
      <Corner />
      <RulerX>{Array.from({ length: 11 }, (_, i) => <MarkX key={i}>{100 + i * 10}</MarkX>)}</RulerX>
      <ScrollColumn>
        <VerticalScroll before={123} size={156} after={127} />
      </ScrollColumn>
      <RulerY>{Array.from({ length: 12 }, (_, i) => <MarkY key={i}><MarkYText>{50 + i * 10}</MarkYText></MarkY>)}</RulerY>
      <Canvas>
        <Selection />
        <FloatingToolbar />
      </Canvas>
      <ScrollRow $horizontal>
        <ScrollArrow aria-label="Scroll left"><Icon name="left" size={9} /></ScrollArrow>
        <Track><Space $grow={133} /><Thumb $grow={104} /><Space $grow={136} /></Track>
        <ScrollArrow aria-label="Scroll right"><Icon name="right" size={9} /></ScrollArrow>
      </ScrollRow>
    </DrawGrid>
    <PageBar>
      <IconButton aria-label="Page list"><Icon name="chevronUp" size={12} /></IconButton>
      <PageSelect aria-label="Page"><option>Page-1</option></PageSelect>
      <AddPage aria-label="Add page"><Icon name="plus" size={12} /></AddPage>
      <PageTab>Page-1</PageTab>
    </PageBar>
    <PaletteBar>
      <PaletteName>Fill</PaletteName>
      <Palette>
        {palette.map((c, i) => <Swatch key={i} aria-label={`#${c}`} style={{ background: `#${c}` }} />)}
      </Palette>
    </PaletteBar>
  </Center>
)

const FillPanel = () => {
  const [kind, setKind] = useState('Picture or texture fill')
  const [amount, setAmount] = useState(0)
  return (
    <Dock>
      <PanelHead $left={8} $right={9}>
        <PanelTitle>Fill</PanelTitle>
        <IconButton aria-label="Close fill panel"><Icon name="close" size={12} /></IconButton>
      </PanelHead>
      <DockBody>
        <DockStrip>
          {dockTools.map(name => (
            <DockButton key={name} $active={name === 'bucket'} aria-label={name}><Icon name={name} size={20} /></DockButton>
          ))}
        </DockStrip>
        <FillForm>
          <FillKinds aria-label="Fill kind">
            {fillKinds.map(k => (
              <Choice key={k}>
                <Radio type="radio" name="kind" checked={kind === k} onChange={() => setKind(k)} />
                {k}
              </Choice>
            ))}
          </FillKinds>
          <FieldGrid>
            <FieldLabel htmlFor="texture">Texture:</FieldLabel>
            <TextureBox>
              <Combo id="texture" $w={61} $h={23} $caret={2}><option aria-label="Leather" /></Combo>
              <TexturePreview width="46" height="13">
                <defs><Leather id="hide-small" /></defs>
                <rect width="46" height="13" filter="url(#hide-small)" />
              </TexturePreview>
            </TextureBox>
            <FieldLabel htmlFor="transparency">Transparency:</FieldLabel>
            <Slider id="transparency" type="range" min="0" max="100" value={amount} onChange={e => setAmount(e.target.value)} />
            <Spinner>
              <SpinInput aria-label="Transparency percent" value={`${amount} %`} onChange={e => setAmount(parseInt(e.target.value) || 0)} />
              <SpinArrows type="button" aria-label="Step"><Icon name="spin" size={12} /></SpinArrows>
            </Spinner>
            <FieldLabel htmlFor="file">Insert from:</FieldLabel>
            <PlainButton id="file" type="button">File...</PlainButton>
            <Choice><Check type="checkbox" />Fit to</Choice>
          </FieldGrid>
        </FillForm>
      </DockBody>
    </Dock>
  )
}

const BaiduMark = () => (
  <Watermark width="182" height="94" aria-label="Baidu Jingyan">
    <g fill="#fff" stroke="#dedede" strokeWidth="1.500" fontFamily="'Liberation Sans', sans-serif" fontWeight="700">
      <text x="0" y="60" fontSize="41">Bai</text>
      <ellipse cx="68" cy="27" rx="7" ry="9" />
      <ellipse cx="81" cy="14" rx="7" ry="9" />
      <ellipse cx="97" cy="15" rx="7" ry="9" />
      <ellipse cx="107" cy="31" rx="7" ry="9" />
      <path d="M88 29c8 0 10 8 16 13s8 18-3 20c-6 1-9-1-14-1s-8 2-14 1c-11-2-9-15-3-20s9-13 18-13z" />
      <text x="73" y="57" fontSize="24">du</text>
      <text x="115" y="59" fontSize="31" fontFamily="'Noto Sans CJK SC', sans-serif">经验</text>
      <text x="2" y="84" fontSize="22" fontWeight="400" strokeWidth="1">jingyan.baidu.com</text>
    </g>
  </Watermark>
)

export default function App() {
  return (
    <>
      <GlobalStyle />
      <Window>
        <TopBar />
        <Menu />
        <RibbonBar />
        <Workspace>
          <LibraryPanel />
          <DrawingArea />
          <FillPanel />
        </Workspace>
      </Window>
      <BaiduMark />
    </>
  )
}
